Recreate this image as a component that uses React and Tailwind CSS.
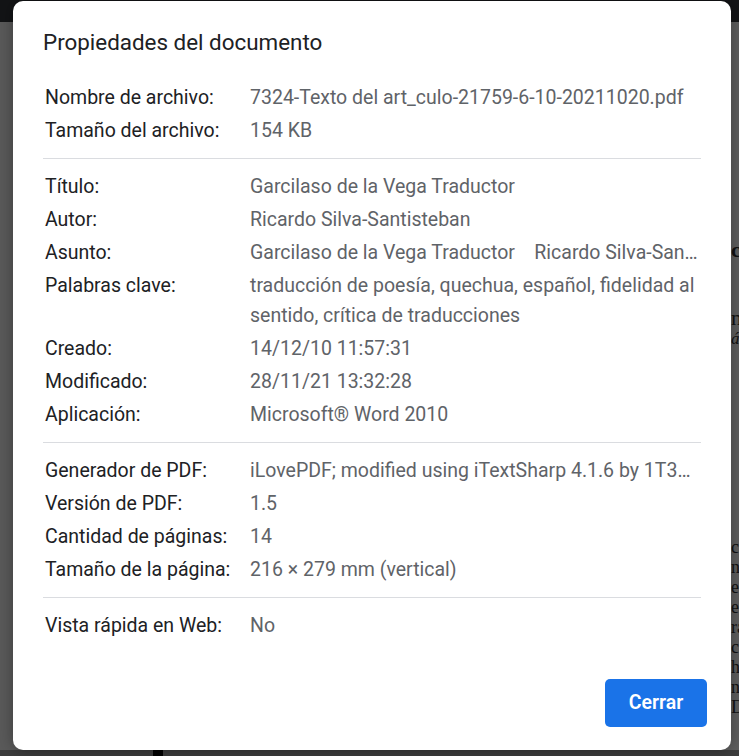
import React from 'react';

const sections = [
    [
        ['Nombre de archivo:', '7324-Texto del art_culo-21759-6-10-20211020.pdf'],
        ['Tamaño del archivo:', '154 KB'],
    ],
    [
        ['Título:', 'Garcilaso de la Vega Traductor'],
        ['Autor:', 'Ricardo Silva-Santisteban'],
        ['Asunto:', 'Garcilaso de la Vega Traductor    Ricardo Silva-Santisteban', true],
        ['Palabras clave:', 'traducción de poesía, quechua, español, fidelidad al sentido, crítica de traducciones'],
        ['Creado:', '14/12/10 11:57:31'],
        ['Modificado:', '28/11/21 13:32:28'],
        ['Aplicación:', 'Microsoft® Word 2010'],
    ],
    [
        ['Generador de PDF:', 'iLovePDF; modified using iTextSharp 4.1.6 by 1T3XT', true],
        ['Versión de PDF:', '1.5'],
        ['Cantidad de páginas:', '14'],
        ['Tamaño de la página:', '216 × 279 mm (vertical)'],
    ],
    [
        ['Vista rápida en Web:', 'No'],
    ],
];

// trozos de la pagina del pdf que asoman detras del dialogo
const pageLines = [
    { t: 'c', cls: 'mt-[216px] font-bold text-[22px] leading-[24px]' },
    { t: 'n', cls: 'mt-[45px] text-[22px] leading-[22px]' },
    { t: 'á', cls: 'italic text-[17px] leading-[20px]' },
    { t: 'c', cls: 'mt-[188px]' },
    { t: 'na', cls: '' },
    { t: 'e', cls: '' },
    { t: 'er', cls: '' },
    { t: 'ra', cls: '' },
    { t: 'c', cls: '' },
    { t: 'h', cls: '' },
    { t: 'nc', cls: '' },
    { t: 'Dr', cls: '' },
];

function Row({ label, value, truncate }) {
    return (
        <div className="flex py-[1.5px] leading-[30px] text-[19.5px]">
            <div className="w-[205px] shrink-0 pl-[2px] text-[#202124]">{label}</div>
            <div className={`flex-1 min-w-0 pl-[2px] text-[#5f6368] ${truncate ? 'truncate whitespace-pre' : ''}`}>
                {value}
            </div>
        </div>
    );
}

export default function App() {
    return (
        <div className="relative h-[756px] w-[739px] overflow-hidden bg-[#5a5a5a] font-['Roboto',sans-serif]">
            {/* barra superior del visor */}
            <div className="h-[22px] bg-[#131416]" />

            {/* pagina del pdf (oscurecida) */}
            <div className="flex h-[728px]">
                <div className="w-[150px] shrink-0" />
                <div className="flex flex-1 justify-end bg-[#5f5f5f]">
                    <div className="flex w-[8px] flex-col overflow-hidden font-['Liberation_Serif',serif] text-[18px] leading-[20px] text-[#111]">
                        {pageLines.map((l, i) => (
                            <span key={i} className={`whitespace-nowrap ${l.cls}`}>{l.t}</span>
                        ))}
                    </div>
                </div>
            </div>
            <div className="flex h-[6px] bg-[#3d3d3d]">
                <div className="ml-[153px] w-[10px] bg-black" />
            </div>

            {/* Dialogo */}
            <div className="absolute left-[13px] top-[1px] flex h-[749px] w-[718px] flex-col rounded-[10px] bg-white px-[30px] pt-[27px] shadow-[0_0_16px_rgba(0,0,0,0.35)]">
                <h1 className="text-[22.4px] leading-[28px] text-[#202124]">Propiedades del documento</h1>

                <div className="mt-[25px] flex flex-col">
                    {sections.map((rows, i) => (
                        <div key={i}>
                            {i > 0 && <div className="my-[11px] h-px bg-[#dadce0]" />}
                            {rows.map(([label, value, truncate]) => (
                                <Row key={label} label={label} value={value} truncate={truncate} />
                            ))}
                        </div>
                    ))}
                </div>

                <div className="mt-auto mb-[23px] -mr-[6px] flex justify-end">
                    <button className="h-[48px] w-[102px] rounded-[5px] bg-[#1a73e8] text-[19.5px] font-semibold text-white">
                        Cerrar
                    </button>
                </div>
            </div>
        </div>
    );
}
